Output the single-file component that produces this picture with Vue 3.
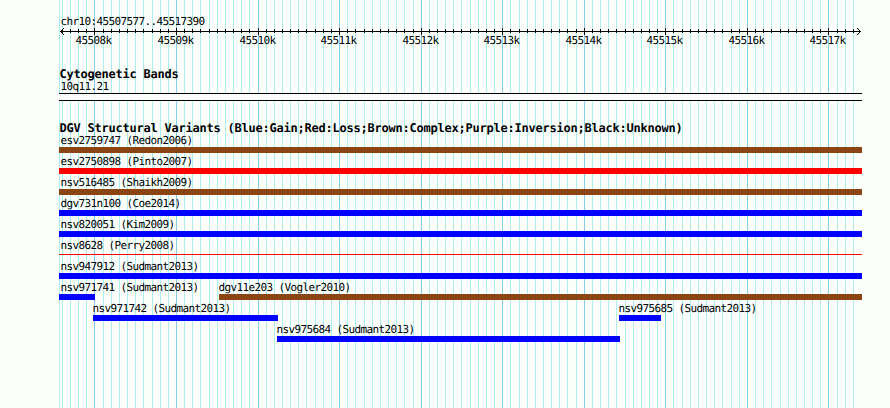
<script setup>
const LEFT = 59
const RIGHT = 862
const PX_PER_100BP = 8.156
const FIRST_MAJOR = 94.42

// one line every 100bp, a darker one every 1000bp
const lines = []
for (let i = -4; i <= 93; i++) {
  lines.push({
    x: Math.round(FIRST_MAJOR + i * PX_PER_100BP),
    major: i % 10 === 0,
    label: `${45508 + i / 10}k`,
  })
}
const majors = lines.filter((l) => l.major)

const lanes = [
  [{ name: 'esv2759747 (Redon2006)', type: 'complex', start: LEFT, end: RIGHT }],
  [{ name: 'esv2750898 (Pinto2007)', type: 'loss', start: LEFT, end: RIGHT }],
  [{ name: 'nsv516485 (Shaikh2009)', type: 'complex', start: LEFT, end: RIGHT }],
  [{ name: 'dgv731n100 (Coe2014)', type: 'gain', start: LEFT, end: RIGHT }],
  [{ name: 'nsv820051 (Kim2009)', type: 'gain', start: LEFT, end: RIGHT }],
  [{ name: 'nsv8628 (Perry2008)', type: 'loss', start: LEFT, end: RIGHT, thin: true }],
  [{ name: 'nsv947912 (Sudmant2013)', type: 'gain', start: LEFT, end: RIGHT }],
  [
    { name: 'nsv971741 (Sudmant2013)', type: 'gain', start: LEFT, end: 95 },
    { name: 'dgv11e203 (Vogler2010)', type: 'complex', start: 219, end: RIGHT },
  ],
  [
    { name: 'nsv971742 (Sudmant2013)', type: 'gain', start: 93, end: 278 },
    { name: 'nsv975685 (Sudmant2013)', type: 'gain', start: 619, end: 661 },
  ],
  [{ name: 'nsv975684 (Sudmant2013)', type: 'gain', start: 277, end: 620 }],
]

// gap between a feature and whatever precedes it in the lane
const offset = (lane, i) => lane[i].start - (i ? lane[i - 1].end : LEFT)
</script>

<template>
  <div class="browser">
    <svg class="grid" width="890" height="408" shape-rendering="crispEdges">
      <rect class="minor" x="59" y="0" width="1" height="408" />
      <rect
        v-for="l in lines"
        :key="l.x"
        :class="l.major ? 'major' : 'minor'"
        :x="l.x"
        y="0"
        width="1"
        height="408"
      />
    </svg>

    <main class="tracks">
      <section class="ruler">
        <div class="label region">chr10:45507577..45517390</div>
        <svg class="axis" width="803" height="21" viewBox="59 28 803 21">
          <g shape-rendering="crispEdges">
            <rect x="60" y="31" width="801" height="1" />
            <rect
              v-for="l in lines"
              :key="l.x"
              :x="l.x"
              :y="l.major ? 28 : 29"
              width="1"
              :height="l.major ? 7 : 4"
            />
            <path d="M61 30h1v1h-1zM62 29h1v1h-1zM63 28h1v1h-1zM61 32h1v1h-1zM62 33h1v1h-1zM63 34h1v1h-1z" />
            <path d="M859 30h1v1h-1zM858 29h1v1h-1zM857 28h1v1h-1zM859 32h1v1h-1zM858 33h1v1h-1zM857 34h1v1h-1z" />
          </g>
          <text v-for="l in majors" :key="l.label" :x="l.x - 18.6" y="44">{{ l.label }}</text>
        </svg>
      </section>

      <section class="cyto">
        <h2>Cytogenetic Bands</h2>
        <div class="label">10q11.21</div>
        <div class="band"></div>
      </section>

      <section class="variants">
        <h2>DGV Structural Variants (Blue:Gain;Red:Loss;Brown:Complex;Purple:Inversion;Black:Unknown)</h2>
        <div v-for="(lane, n) in lanes" :key="n" class="lane">
          <div
            v-for="(f, i) in lane"
            :key="f.name"
            class="feature"
            :style="{ marginLeft: offset(lane, i) + 'px', width: f.end - f.start + 'px' }"
          >
            <div class="label" :class="{ shifted: f.start > LEFT }">{{ f.name }}</div>
            <div class="bar" :class="[f.type, { thin: f.thin }]"></div>
          </div>
        </div>
      </section>
    </main>
  </div>
</template>

<style>
body {
  margin: 0;
}
</style>

<style scoped>
.browser {
  position: relative;
  width: 890px;
  height: 408px;
  overflow: hidden;
  background: #fdfffc;
  color: #000;
  font-family: 'DejaVu Sans Mono', monospace;
  text-rendering: geometricPrecision;
}

.grid {
  position: absolute;
  inset: 0;
}

.minor {
  fill: #afeeee;
}

.major {
  fill: #87ceeb;
}

.tracks {
  position: relative;
  width: 803px;
  padding: 16px 0 0 59px;
}

.label,
.axis text {
  font-size: 11px;
  letter-spacing: -0.622px;
}

.label {
  height: 12px;
  line-height: 12px;
  padding-left: 1.4px;
  white-space: nowrap;
}

.label.shifted {
  padding-left: 0;
  margin-left: -0.6px;
}

.axis {
  display: block;
}

h2 {
  margin: 0;
  height: 13px;
  line-height: 13px;
  padding-left: 0.4px;
  font-size: 12px;
  font-weight: bold;
  letter-spacing: -0.224px;
  white-space: nowrap;
}

.cyto {
  margin-top: 19px;
}

.band {
  box-sizing: border-box;
  height: 8px;
  border: solid #000;
  border-width: 1px 0;
  background: #fdfffc;
}

.variants {
  margin-top: 21px;
}

.lane {
  display: flex;
  height: 21px;
}

.feature {
  flex: none;
}

.bar {
  height: 6px;
}

.bar.thin {
  height: 1px;
  margin-top: 2px;
}

.complex {
  background: #8b4513;
}

.loss {
  background: #f00;
}

.gain {
  background: #00f;
}
</style>
